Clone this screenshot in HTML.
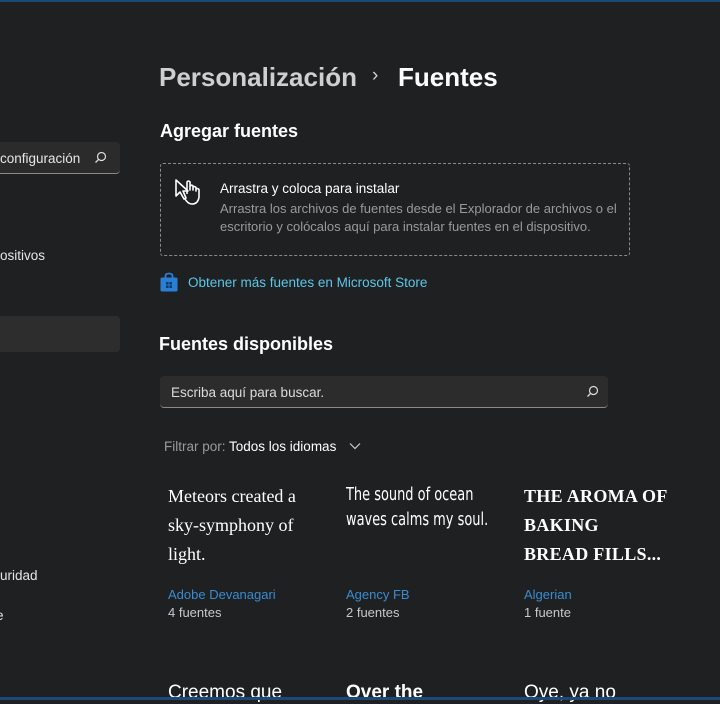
<!DOCTYPE html>
<html><head><meta charset="utf-8"><style>
*{margin:0;padding:0;box-sizing:border-box}
body{width:720px;height:700px;overflow:hidden;background:#1f2022;font-family:"Segoe UI","Liberation Sans","DejaVu Sans",sans-serif;color:#fff;position:relative}
.a{position:absolute;white-space:nowrap}
.t{position:absolute;white-space:nowrap;margin-top:2px}
.top{left:0;top:0;width:720px;height:2px;background:#1b4a78}
.bot{left:0;top:697px;width:720px;height:3px;background:#1b4a78}
.srch{left:-10px;top:142px;width:130px;height:32px;background:#2b2b2c;border-radius:4px;border-bottom:1px solid #8a8a8a}
.sel{left:-10px;top:316px;width:130px;height:36px;background:#2d2d2e;border-radius:4px}
.drop{left:160px;top:163px;width:470px;height:93px;border:1.5px dashed #8a8a8a;border-radius:3px}
.box2{left:160px;top:376px;width:448px;height:32px;background:#2c2c2d;border-radius:4px;border-bottom:1px solid #8a8a8a}
.link{color:#5cc6e8}
.blue{color:#3a8bd0;font-size:13px}
.gray{color:#c8c8c8;font-size:13px}
.prev{font-size:18px;line-height:29px;font-family:"Liberation Serif",serif;color:#fff}
</style></head><body>
<div class="a top"></div>
<div class="a srch"></div>
<div class="t" style="left:0;top:149px;font-size:13.5px;color:#e6e6e6">configuración</div>
<svg class="a" style="left:94px;top:151px" width="13" height="13" viewBox="0 0 13 13"><circle cx="7.5" cy="5.5" r="4" fill="none" stroke="#ddd" stroke-width="1.2"/><path d="M4.6 8.4 1.5 11.5" stroke="#ddd" stroke-width="1.3"/></svg>
<div class="t" style="left:0;top:246px;font-size:13.5px;color:#e6e6e6">ositivos</div>
<div class="a sel"></div>
<div class="t" style="left:0;top:566px;font-size:13.5px;color:#e6e6e6">uridad</div>
<div class="t" style="left:-4px;top:606px;font-size:13.5px;color:#e6e6e6">e</div>

<div class="t" style="left:159px;top:60px;font-size:26px;font-weight:600;color:#cfcfcf">Personalización</div>
<div class="t" style="left:372px;top:63px;font-size:19px;color:#cfcfcf">›</div>
<div class="t" style="left:398px;top:60px;font-size:26px;font-weight:600;color:#fff">Fuentes</div>
<div class="t" style="left:160px;top:119px;font-size:18px;font-weight:600">Agregar fuentes</div>
<div class="a drop"></div>
<svg class="a" style="left:174px;top:178px" width="32" height="28" viewBox="0 0 32 28"><path d="M2 2 L2 18 L6 14 L10 21 L12 20 L9 13 L14 13 Z" fill="#1f2022" stroke="#fff" stroke-width="1.6" stroke-linejoin="round"/><path d="M13 16 L13 4 Q14 2 16 4 L16 12 L16 8 Q17.5 6.5 19 8 L19 12 L19 9 Q20.5 8 22 9.5 L22 13 L22 11 Q23.5 10 25 11.5 L25 19 Q24 26 18 26 Q14 26 11 21" fill="none" stroke="#fff" stroke-width="1.6" stroke-linejoin="round"/></svg>
<div class="t" style="left:220px;top:179px;font-size:13.5px;color:#fff">Arrastra y coloca para instalar</div>
<div class="t" style="left:220px;top:198px;font-size:13px;color:#9a9a9a;line-height:18px">Arrastra los archivos de fuentes desde el Explorador de archivos o el<br>escritorio y colócalos aquí para instalar fuentes en el dispositivo.</div>
<svg class="a" style="left:160px;top:272px" width="18" height="20" viewBox="0 0 18 20"><path d="M5.5 6 V4 Q5.5 1.5 9 1.5 Q12.5 1.5 12.5 4 V6" fill="none" stroke="#2a7fd4" stroke-width="1.8"/><rect x="0.5" y="5.5" width="17" height="14" rx="1.5" fill="#2a7fd4"/><rect x="6" y="10" width="2.6" height="2.6" fill="#0c3c6c"/><rect x="9.4" y="10" width="2.6" height="2.6" fill="#0c3c6c"/><rect x="6" y="13.4" width="2.6" height="2.6" fill="#0c3c6c"/><rect x="9.4" y="13.4" width="2.6" height="2.6" fill="#0c3c6c"/></svg>
<div class="t" style="left:188px;top:273px;font-size:13.5px">
<span class="link">Obtener más fuentes en Microsoft Store</span></div>
<div class="t" style="left:159px;top:332px;font-size:18px;font-weight:600">Fuentes disponibles</div>
<div class="a box2"></div>
<div class="t" style="left:171px;top:383px;font-size:13.5px;color:#dcdcdc">Escriba aquí para buscar.</div>
<svg class="a" style="left:586px;top:385px" width="13" height="13" viewBox="0 0 13 13"><circle cx="7.5" cy="5.5" r="4" fill="none" stroke="#ddd" stroke-width="1.2"/><path d="M4.6 8.4 1.5 11.5" stroke="#ddd" stroke-width="1.3"/></svg>
<div class="t" style="left:164px;top:437px;font-size:13.5px;color:#9a9a9a">Filtrar por: <span style="color:#fff">Todos los idiomas</span></div>
<svg class="a" style="left:349px;top:442px" width="12" height="8" viewBox="0 0 12 8"><path d="M1 1.5 6 6.5 11 1.5" fill="none" stroke="#ccc" stroke-width="1.2"/></svg>

<div class="a prev" style="left:168px;top:482px">Meteors created a<br>sky-symphony of<br>light.</div>
<div class="a" style="left:346px;top:482px;font-size:18px;line-height:25px;font-family:'Liberation Sans Narrow','DejaVu Sans Condensed',sans-serif;transform:scaleX(0.8);transform-origin:left">The sound of ocean<br>waves calms my soul.</div>
<div class="a" style="left:524px;top:482px;font-size:18px;line-height:29px;font-family:'Liberation Serif',serif;font-weight:bold;letter-spacing:0.3px">THE AROMA OF<br>BAKING<br>BREAD FILLS...</div>
<div class="t" style="left:168px;top:584px" ><span class="blue">Adobe Devanagari</span></div>
<div class="t gray" style="left:168px;top:603px">4 fuentes</div>
<div class="t" style="left:346px;top:584px"><span class="blue">Agency FB</span></div>
<div class="t gray" style="left:346px;top:603px">2 fuentes</div>
<div class="t" style="left:524px;top:584px"><span class="blue">Algerian</span></div>
<div class="t gray" style="left:524px;top:603px">1 fuente</div>
<div class="t" style="left:168px;top:680px;font-size:19px">Creemos que</div>
<div class="t" style="left:346px;top:680px;font-size:19px;font-weight:bold">Over the</div>
<div class="t" style="left:524px;top:680px;font-size:19px">Oye, ya no</div>
<div class="a bot"></div>
</body></html>
